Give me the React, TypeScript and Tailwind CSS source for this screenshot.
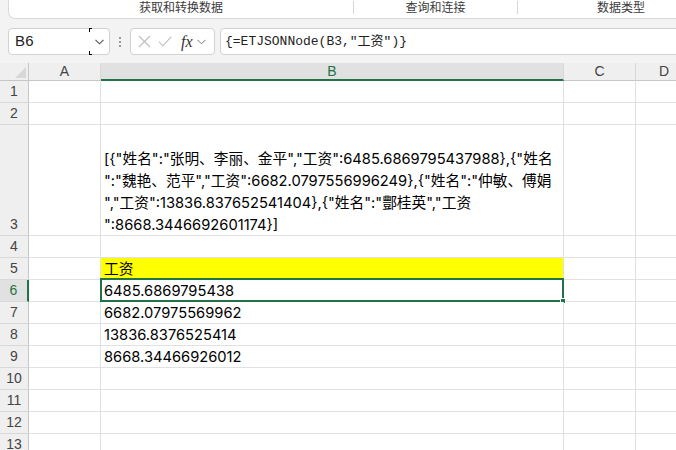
import React from "react";

const cellFont = { fontFamily: '"Inter", "Noto Sans CJK SC", sans-serif' };

type Row = {
  n: number;
  h: string;
  b?: string[];
  yellow?: boolean;
  selected?: boolean;
};

const rows: Row[] = [
  { n: 1, h: "h-[22px]" },
  { n: 2, h: "h-[22px]" },
  {
    n: 3,
    h: "h-[111px]",
    b: [
      '[{"姓名":"张明、李丽、金平","工资":6485.6869795437988},{"姓名',
      '":"魏艳、范平","工资":6682.0797556996249},{"姓名":"仲敏、傅娟',
      '","工资":13836.837652541404},{"姓名":"酆桂英","工资',
      '":8668.3446692601174}]',
    ],
  },
  { n: 4, h: "h-[22px]" },
  { n: 5, h: "h-[22px]", b: ["工资"], yellow: true },
  { n: 6, h: "h-[22px]", b: ["6485.6869795438"], selected: true },
  { n: 7, h: "h-[22px]", b: ["6682.07975569962"] },
  { n: 8, h: "h-[22px]", b: ["13836.8376525414"] },
  { n: 9, h: "h-[22px]", b: ["8668.34466926012"] },
  { n: 10, h: "h-[22px]" },
  { n: 11, h: "h-[22px]" },
  { n: 12, h: "h-[22px]" },
  { n: 13, h: "h-[22px]" },
];

function Ribbon() {
  return (
    <div className="h-[19px] flex pl-[8px] shrink-0">
      <div className="flex-1 flex items-start bg-white border-b border-l border-[#dadada] rounded-bl-[7px] text-[12px] text-[#3b3b3b] leading-[14px] font-['Noto_Sans_CJK_SC',sans-serif]">
        <div className="w-[344px] text-center">获取和转换数据</div>
        <div className="w-px h-[13px] mt-[1px] bg-[#d6d6d6]" />
        <div className="w-[163px] text-center">查询和连接</div>
        <div className="w-px h-[13px] mt-[1px] bg-[#d6d6d6]" />
        <div className="w-[206px] text-center">数据类型</div>
      </div>
    </div>
  );
}

function FormulaBar() {
  return (
    <div className="h-[44px] pt-[9px] flex items-start shrink-0">
      <div className="ml-[8px] w-[102px] h-[27px] flex bg-white border border-[#d2d2d2] rounded-[4px]">
        <div className="flex-1 flex items-center pl-[6px] text-[15px] text-[#222] font-['Liberation_Sans',sans-serif] tracking-[0.3px]">
          B6
        </div>
        <div className="relative w-[20px] flex items-center justify-center">
          <span className="absolute left-0 top-[-1px] w-[3px] h-[4px] border-l border-t border-black" />
          <span className="absolute left-0 bottom-[-1px] w-[3px] h-[4px] border-l border-b border-black" />
          <svg width="9" height="6" viewBox="0 0 9 6">
            <path d="M0.5 0.8 L4.5 4.8 L8.5 0.8" fill="none" stroke="#555" strokeWidth="1.1" />
          </svg>
        </div>
      </div>
      <div className="w-[20px] h-[27px] flex flex-col items-center justify-center gap-[2px]">
        <span className="w-[2px] h-[2px] bg-[#9a9a9a]" />
        <span className="w-[2px] h-[2px] bg-[#9a9a9a]" />
        <span className="w-[2px] h-[2px] bg-[#9a9a9a]" />
      </div>
      <div className="w-[85px] h-[27px] flex items-center bg-white border border-[#d2d2d2] rounded-[4px] pl-[7px] gap-[7px]">
        <svg width="13" height="13" viewBox="0 0 13 13">
          <path d="M1 1 L12 12 M12 1 L1 12" stroke="#bdbdbd" strokeWidth="1.1" />
        </svg>
        <svg width="14" height="11" viewBox="0 0 14 11">
          <path d="M0.8 5.5 L4.8 9.8 L13.2 0.8" fill="none" stroke="#bdbdbd" strokeWidth="1.1" />
        </svg>
        <span className="ml-[2px] text-[16px] italic text-[#333] font-['Liberation_Serif',serif] leading-none">
          fx
        </span>
        <svg width="9" height="6" viewBox="0 0 9 6" className="-ml-[3px]">
          <path d="M0.5 0.8 L4.5 4.8 L8.5 0.8" fill="none" stroke="#777" strokeWidth="1" />
        </svg>
      </div>
      <div className="ml-[5px] flex-1 -mr-[6px] h-[27px] flex items-center bg-white border border-[#d2d2d2] rounded-[4px] pl-[4px] text-[13px] text-[#222] font-['Liberation_Mono','Noto_Sans_CJK_SC',monospace]">
        {'{=ETJSONNode(B3,"工资")}'}
      </div>
    </div>
  );
}

function HeaderRow() {
  return (
    <div className="flex h-[18px] shrink-0 text-[14px] text-[#444] font-['Liberation_Sans',sans-serif]">
      <div className="w-[29px] relative bg-[#efefef] border-r border-b border-[#c6c6c6]">
        <svg width="11" height="11" viewBox="0 0 11 11" className="absolute left-[15px] top-[4px]">
          <path d="M11 0 L11 11 L0 11 Z" fill="#d8d8d8" />
        </svg>
      </div>
      <div className="w-[72px] flex items-center justify-center bg-[#efefef] border-r border-r-[#d8d8d8] border-b border-b-[#c6c6c6]">
        A
      </div>
      <div className="w-[463px] flex items-center justify-center bg-[#e1e1e1] border-r border-r-[#d8d8d8] border-b-2 border-b-[#217346] text-[#217346] pt-[1px]">
        B
      </div>
      <div className="w-[72px] flex items-center justify-center bg-[#efefef] border-r border-r-[#d8d8d8] border-b border-b-[#c6c6c6]">
        C
      </div>
      <div className="flex-1 flex items-center justify-center bg-[#efefef] border-b border-[#c6c6c6] pl-[16px]">
        D
      </div>
    </div>
  );
}

function DataRow({ row }: { row: Row }) {
  return (
    <div className={`flex shrink-0 ${row.h}`}>
      <div
        className={
          row.selected
            ? "w-[29px] flex items-end justify-center pb-[1px] bg-[#e1e1e1] border-r-2 border-r-[#217346] border-b border-b-[#d8d8d8] text-[#217346] text-[14px] leading-[20px] font-['Liberation_Sans',sans-serif]"
            : "w-[29px] flex items-end justify-center pb-[1px] bg-[#efefef] border-r border-r-[#c6c6c6] border-b border-b-[#d8d8d8] text-[#444] text-[14px] leading-[20px] font-['Liberation_Sans',sans-serif]"
        }
      >
        {row.n}
      </div>
      <div className="w-[72px] bg-white border-r border-b border-[#e1e1e1]" />
      <div
        className={
          row.yellow
            ? "w-[463px] relative flex flex-col justify-end pl-[3px] bg-[#ffff00] border-r border-b border-[#e1e1e1] text-[14.7px] leading-[22px] text-black"
            : "w-[463px] relative flex flex-col justify-end pl-[3px] bg-white border-r border-b border-[#e1e1e1] text-[14.7px] leading-[22px] text-black"
        }
        style={cellFont}
      >
        {row.b?.map((line, i) => (
          <div key={i} className="whitespace-pre translate-y-[1px]">
            {line}
          </div>
        ))}
        {row.selected && (
          <>
            <div className="absolute left-[-1px] top-[-2px] right-[-1px] bottom-[-1px] border-2 border-[#217346]" />
            <div className="absolute right-[-3px] bottom-[-3px] w-[6px] h-[6px] bg-[#217346] border border-white" />
          </>
        )}
      </div>
      <div className="w-[72px] bg-white border-r border-b border-[#e1e1e1]" />
      <div className="flex-1 bg-white border-b border-[#e1e1e1]" />
    </div>
  );
}

export default function App() {
  return (
    <div className="w-[676px] h-[450px] overflow-hidden flex flex-col bg-[#f3f3f3]">
      <Ribbon />
      <FormulaBar />
      <HeaderRow />
      {rows.map((r) => (
        <DataRow key={r.n} row={r} />
      ))}
    </div>
  );
}
